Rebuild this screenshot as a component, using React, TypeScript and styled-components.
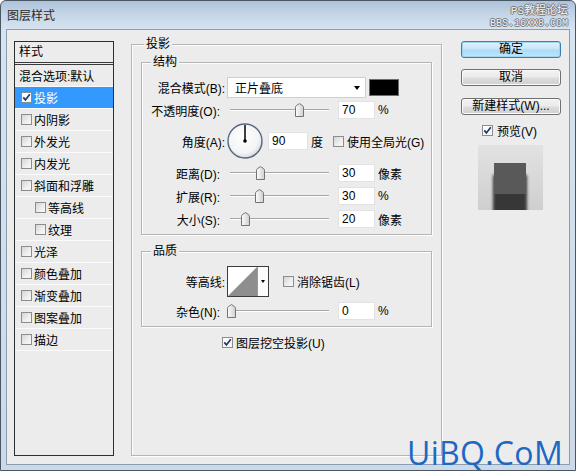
import React from "react";
import styled, { createGlobalStyle } from "styled-components";

const Global = createGlobalStyle`
  html, body { margin: 0; padding: 0; background: #ffffff; }
  body {
    font-family: "Liberation Sans", "Noto Sans CJK SC", sans-serif;
    font-size: 12px;
    color: #000;
  }
  * { box-sizing: border-box; }
`;

const Window = styled.div`
  position: relative;
  width: 576px;
  height: 471px;
  border: 1px solid #4a5664;
  border-radius: 6px 6px 0 0;
  background: linear-gradient(180deg, #adc2d9 0px, #c6d6e8 14px, #d6e3f0 28px, #cbd9e9 100%);
  padding: 0 5px 5px;
  display: flex;
  flex-direction: column;
  overflow: hidden;
`;

const TitleBar = styled.div`
  height: 28px;
  flex: none;
  display: flex;
  align-items: center;
  padding: 0 0 1px 1px;
  font-size: 12px;
  color: #2a2a2a;
`;

const Stamp = styled.div`
  position: absolute;
  top: 4px;
  right: 7px;
  text-align: right;
  font-family: "Liberation Mono", "Noto Sans CJK SC", monospace;
  color: #f2f2f2;
  text-shadow: 1px 0 0 #777, -1px 0 0 #777, 0 1px 0 #777, 0 -1px 0 #777;
`;

const StampLine = styled.div<{ $size: number }>`
  font-size: ${(p) => p.$size}px;
  line-height: ${(p) => p.$size + 2}px;
`;

const Watermark = styled.div`
  position: absolute;
  top: 437px;
  left: 406px;
  font-family: "Open Sans", "Liberation Sans", sans-serif;
  font-size: 32px;
  line-height: 30px;
  color: #1c68c4;
  letter-spacing: 0.3px;
`;

const Client = styled.div`
  flex: 1;
  border: 1px solid #8d9db1;
  background: #ececec;
  display: flex;
  align-items: flex-start;
  padding: 11px 0 0 7px;
`;

/* ---------- left styles list ---------- */

const StylesPanel = styled.div`
  width: 100px;
  height: 415px;
  flex: none;
  border: 1px solid #2e2e2e;
  background: #ececec;
`;

const PanelHeader = styled.div`
  height: 23px;
  line-height: 20px;
  padding-left: 4px;
  border-bottom: 3px double #3a3a3a;
`;

const StyleRow = styled.div<{ $selected?: boolean; $indent?: number }>`
  height: 22px;
  display: flex;
  align-items: center;
  gap: 2px;
  padding-left: ${(p) => p.$indent ?? 6}px;
  border-bottom: 1px solid #fbfbfb;
  background: ${(p) => (p.$selected ? "#3399ff" : "transparent")};
  color: ${(p) => (p.$selected ? "#ffffff" : "#000")};
  white-space: nowrap;
`;

/* ---------- checkbox ---------- */

const Box = styled.span<{ $checked?: boolean }>`
  width: 11px;
  height: 11px;
  flex: none;
  border: 1px solid #8b8c8c;
  background: ${(p) =>
    p.$checked
      ? "linear-gradient(135deg, #ffffff 0%, #f4f4f4 100%)"
      : "linear-gradient(135deg, #d5d5d5 0%, #efefef 60%, #f8f8f8 100%)"};
  display: inline-flex;
  align-items: center;
  justify-content: center;
`;

const Check = ({ checked }: { checked?: boolean }) => (
  <Box $checked={checked}>
    {checked && (
      <svg width="9" height="9" viewBox="0 0 9 9">
        <path d="M1.3 4.4 L3.4 6.9 L7.8 1.2" fill="none" stroke="#1d3a6c" strokeWidth="1.7" />
      </svg>
    )}
  </Box>
);

/* ---------- middle groups ---------- */

const Middle = styled.div`
  width: 311px;
  flex: none;
  margin: -4px 0 0 17px;
  display: flex;
  flex-direction: column;
`;

const Group = styled.fieldset<{ $pt: number; $mt?: number; $h?: number }>`
  margin: ${(p) => p.$mt ?? 0}px 0 0;
  padding: ${(p) => p.$pt}px 9px 6px;
  height: ${(p) => (p.$h ? `${p.$h}px` : "auto")};
  border: 1px solid #b4b4b4;
  box-shadow: inset 1px 1px 0 #ffffff, 1px 1px 0 #ffffff;
  min-width: 0;
`;

const Legend = styled.legend<{ $offset: number }>`
  padding: 0 2px;
  margin-left: ${(p) => p.$offset}px;
  line-height: 15px;
  font-size: 12px;
  background: #ececec;
`;

const FormRow = styled.div<{ $h: number; $mt?: number; $pl?: number }>`
  display: flex;
  align-items: center;
  height: ${(p) => p.$h}px;
  margin-top: ${(p) => p.$mt ?? 0}px;
  padding-left: ${(p) => p.$pl ?? 0}px;
  white-space: nowrap;
`;

const Label = styled.span<{ $slider?: boolean }>`
  width: 74px;
  flex: none;
  text-align: right;
  padding-right: ${(p) => (p.$slider ? 5 : 0)}px;
`;

const SelectBox = styled.div`
  margin-left: 2px;
  width: 139px;
  height: 21px;
  flex: none;
  background: #ffffff;
  border: 1px solid #cfcfcf;
  display: flex;
  align-items: center;
  justify-content: space-between;
  padding: 0 5px 0 7px;
`;

const Caret = styled.span`
  width: 0;
  height: 0;
  border-left: 3.5px solid transparent;
  border-right: 3.5px solid transparent;
  border-top: 4px solid #000;
`;

const Swatch = styled.div`
  margin-left: 3px;
  width: 30px;
  height: 17px;
  flex: none;
  background: #000;
  border: 1px solid #6d6d6d;
`;

const SliderWrap = styled.div`
  position: relative;
  width: 108px;
  height: 18px;
  flex: none;
  &::before {
    content: "";
    position: absolute;
    left: 5px;
    right: 4px;
    top: 8px;
    height: 1px;
    background: #a6a6a6;
  }
  &::after {
    content: "";
    position: absolute;
    left: 5px;
    right: 4px;
    top: 9px;
    height: 1px;
    background: #ffffff;
  }
`;

const Thumb = styled.svg`
  position: absolute;
  top: 2px;
  z-index: 1;
`;

const Slider = ({ pct }: { pct: number }) => (
  <SliderWrap>
    <Thumb width="9" height="14" viewBox="0 0 9 14" style={{ left: 5 + (pct * 99) / 100 - 4.5 }}>
      <defs>
        <linearGradient id="tg" x1="0" y1="0" x2="1" y2="0">
          <stop offset="0" stopColor="#fdfdfd" />
          <stop offset="1" stopColor="#cfcfcf" />
        </linearGradient>
      </defs>
      <path d="M0.5 13.5 V4.2 Q0.5 3.4 1.3 2.7 L4.5 0.6 L7.7 2.7 Q8.5 3.4 8.5 4.2 V13.5 Z" fill="url(#tg)" stroke="#737373" strokeWidth="1" />
    </Thumb>
  </SliderWrap>
);

const NumInput = styled.div<{ $w?: number; $ml?: number }>`
  margin-left: ${(p) => p.$ml ?? 5}px;
  width: ${(p) => p.$w ?? 37}px;
  height: 18px;
  flex: none;
  background: #ffffff;
  border: 1px solid #e2e2e2;
  padding-left: 3px;
  line-height: 16px;
`;

const Unit = styled.span<{ $ml?: number }>`
  margin-left: ${(p) => p.$ml ?? 3}px;
`;

const DialSvg = styled.svg`
  margin-left: 2px;
  flex: none;
`;

const Dial = () => (
  <DialSvg width="36" height="36" viewBox="0 0 36 36">
    <defs>
      <radialGradient id="dg" cx="0.45" cy="0.4" r="0.6">
        <stop offset="0" stopColor="#ffffff" />
        <stop offset="0.75" stopColor="#f3f4f6" />
        <stop offset="1" stopColor="#d5dae2" />
      </radialGradient>
    </defs>
    <circle cx="18" cy="18" r="17" fill="url(#dg)" stroke="#56667f" strokeWidth="1.4" />
    <line x1="18" y1="18" x2="18" y2="2" stroke="#000" strokeWidth="1.5" />
    <circle cx="18" cy="18" r="1.8" fill="#000" />
  </DialSvg>
);

const CheckText = styled.span<{ $ml?: number }>`
  display: inline-flex;
  align-items: center;
  gap: 3px;
  margin-left: ${(p) => p.$ml ?? 0}px;
`;

const ContourBox = styled.div`
  margin-left: 2px;
  width: 42px;
  height: 31px;
  flex: none;
  display: flex;
  border: 1px solid #3c3c3c;
  background: #ffffff;
`;

const ContourDrop = styled.div`
  flex: 1;
  border-left: 1px solid #9a9a9a;
  display: flex;
  align-items: center;
  justify-content: center;
  background: #fbfbfb;
`;

const SmallCaret = styled.span`
  width: 0;
  height: 0;
  border-left: 2.5px solid transparent;
  border-right: 2.5px solid transparent;
  border-top: 3px solid #000;
`;

/* ---------- right column ---------- */

const Right = styled.div`
  width: 100px;
  flex: none;
  margin-left: 19px;
  display: flex;
  flex-direction: column;
`;

const Btn = styled.button<{ $primary?: boolean; $mt?: number }>`
  width: 100px;
  height: 17px;
  margin: ${(p) => p.$mt ?? 0}px 0 0;
  padding: 0;
  font-family: inherit;
  font-size: 12px;
  line-height: 15px;
  color: #000;
  border-radius: 3px;
  border: 1px solid ${(p) => (p.$primary ? "#3c7fb1" : "#707070")};
  background: ${(p) =>
    p.$primary
      ? "linear-gradient(180deg, #e3f4fc 0%, #c4e6f8 48%, #a8dbf6 52%, #bfe6f9 100%)"
      : "linear-gradient(180deg, #f3f3f3 0%, #ebebeb 48%, #dddddd 52%, #d0d0d0 100%)"};
  box-shadow: ${(p) => (p.$primary ? "0 0 0 1px #9fd4f0 inset" : "inset 0 0 0 1px #fbfbfb")};
`;

const PreviewRow = styled.div`
  margin-top: 10px;
  height: 11px;
  padding-left: 21px;
  display: flex;
  align-items: center;
  gap: 4px;
  white-space: nowrap;
`;

const PreviewSvg = styled.svg`
  margin: 9px 0 0 17px;
  flex: none;
`;

const Preview = () => (
  <PreviewSvg width="65" height="65" viewBox="0 0 65 65">
    <defs>
      <linearGradient id="pbg" x1="0" y1="0" x2="0" y2="1">
        <stop offset="0" stopColor="#e2e2e2" />
        <stop offset="1" stopColor="#cfcfcf" />
      </linearGradient>
      <filter id="pbl" x="-30%" y="-30%" width="160%" height="160%">
        <feGaussianBlur stdDeviation="1.6" />
      </filter>
    </defs>
    <rect width="65" height="65" fill="url(#pbg)" />
    <rect x="15" y="30" width="34" height="45" fill="#262626" opacity="0.9" filter="url(#pbl)" />
    <rect x="16" y="18" width="32" height="31" fill="#595959" />
  </PreviewSvg>
);

const styleItems: { name: string; indent?: number; checked?: boolean; selected?: boolean }[] = [
  { name: "投影", checked: true, selected: true },
  { name: "内阴影" },
  { name: "外发光" },
  { name: "内发光" },
  { name: "斜面和浮雕" },
  { name: "等高线", indent: 20 },
  { name: "纹理", indent: 20 },
  { name: "光泽" },
  { name: "颜色叠加" },
  { name: "渐变叠加" },
  { name: "图案叠加" },
  { name: "描边" },
];

export default function App() {
  return (
    <>
      <Global />
      <Window>
        <TitleBar>图层样式</TitleBar>
        <Stamp>
          <StampLine $size={11}>PS教程论坛</StampLine>
          <StampLine $size={10}>BBS.16XX8.COM</StampLine>
        </Stamp>
        <Client>
          <StylesPanel>
            <PanelHeader>样式</PanelHeader>
            <StyleRow $indent={4}>混合选项:默认</StyleRow>
            {styleItems.map((it) => (
              <StyleRow key={it.name} $selected={it.selected} $indent={it.indent}>
                <Check checked={it.checked} />
                <span>{it.name}</span>
              </StyleRow>
            ))}
          </StylesPanel>

          <Middle>
            <Group $pt={3} $h={419}>
              <Legend $offset={3}>投影</Legend>
              <Group $pt={7}>
                <Legend $offset={0}>结构</Legend>
                <FormRow $h={21}>
                  <Label>混合模式(B):</Label>
                  <SelectBox>
                    <span>正片叠底</span>
                    <Caret />
                  </SelectBox>
                  <Swatch />
                </FormRow>
                <FormRow $h={18} $mt={3}>
                  <Label $slider>不透明度(O):</Label>
                  <Slider pct={70} />
                  <NumInput>70</NumInput>
                  <Unit>%</Unit>
                </FormRow>
                <FormRow $h={36} $mt={4}>
                  <Label>角度(A):</Label>
                  <Dial />
                  <NumInput $w={40}>90</NumInput>
                  <Unit>度</Unit>
                  <CheckText $ml={10}>
                    <Check />
                    <span>使用全局光(G)</span>
                  </CheckText>
                </FormRow>
                <FormRow $h={18} $mt={5}>
                  <Label $slider>距离(D):</Label>
                  <Slider pct={31} />
                  <NumInput>30</NumInput>
                  <Unit>像素</Unit>
                </FormRow>
                <FormRow $h={18} $mt={5}>
                  <Label $slider>扩展(R):</Label>
                  <Slider pct={30} />
                  <NumInput>30</NumInput>
                  <Unit>%</Unit>
                </FormRow>
                <FormRow $h={18} $mt={5}>
                  <Label $slider>大小(S):</Label>
                  <Slider pct={16} />
                  <NumInput>20</NumInput>
                  <Unit>像素</Unit>
                </FormRow>
              </Group>

              <Group $pt={7} $mt={9}>
                <Legend $offset={0}>品质</Legend>
                <FormRow $h={31}>
                  <Label>等高线:</Label>
                  <ContourBox>
                    <svg width="29" height="29" viewBox="0 0 29 29">
                      <rect width="29" height="29" fill="#ffffff" />
                      <path d="M0 29 L29 0 L29 29 Z" fill="#8e8e8e" />
                    </svg>
                    <ContourDrop>
                      <SmallCaret />
                    </ContourDrop>
                  </ContourBox>
                  <CheckText $ml={14}>
                    <Check />
                    <span>消除锯齿(L)</span>
                  </CheckText>
                </FormRow>
                <FormRow $h={18} $mt={5}>
                  <Label $slider>杂色(N):</Label>
                  <Slider pct={2} />
                  <NumInput>0</NumInput>
                  <Unit>%</Unit>
                </FormRow>
              </Group>

              <FormRow $h={14} $mt={8} $pl={81}>
                <CheckText>
                  <Check checked />
                  <span>图层挖空投影(U)</span>
                </CheckText>
              </FormRow>
            </Group>
          </Middle>

          <Right>
            <Btn $primary>确定</Btn>
            <Btn $mt={11}>取消</Btn>
            <Btn $mt={12}>新建样式(W)...</Btn>
            <PreviewRow>
              <Check checked />
              <span>预览(V)</span>
            </PreviewRow>
            <Preview />
          </Right>
        </Client>
        <Watermark>UiBQ.CoM</Watermark>
      </Window>
    </>
  );
}
